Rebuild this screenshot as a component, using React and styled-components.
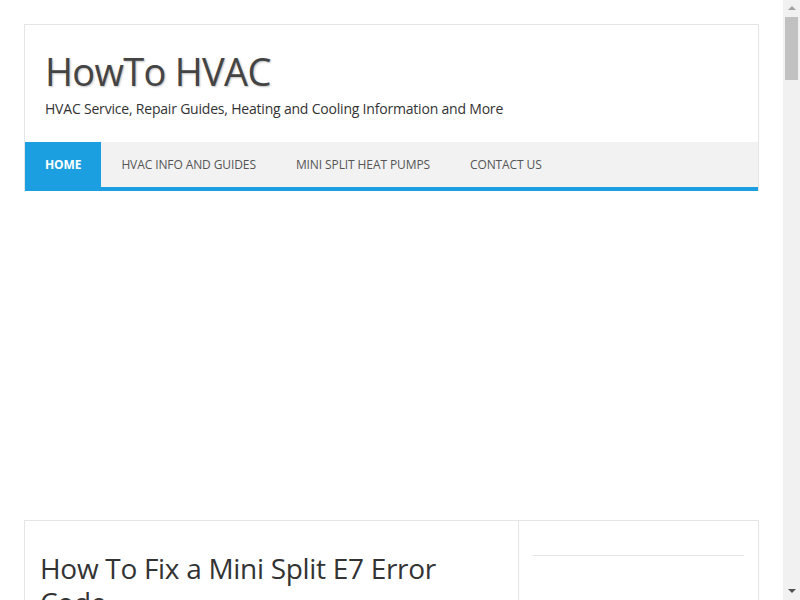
import React from "react";
import styled, { createGlobalStyle } from "styled-components";

const GlobalStyle = createGlobalStyle`
  html, body {
    margin: 0;
    padding: 0;
    background: #fff;
  }
  body {
    font-family: "Open Sans", "Noto Sans", sans-serif;
    color: #333;
    padding-right: 17px;
  }
`;

const Page = styled.div`
  padding: 24px;
  min-height: 5400px;
  box-sizing: border-box;
`;

const Header = styled.header`
  border: 1px solid #e5e5e5;
  border-bottom: none;
`;

const Branding = styled.div`
  padding: 23px 20px 23px 20px;
`;

const SiteTitle = styled.h1`
  margin: 0;
  font-size: 38px;
  font-weight: 400;
  line-height: 46px;
  letter-spacing: -0.7px;
  color: #444;
  text-shadow: 1px 1px 2px rgba(0, 0, 0, 0.25);
`;

const Tagline = styled.p`
  margin: 5px 0 0 0;
  font-size: 14px;
  line-height: 20px;
  letter-spacing: -0.2px;
  color: #333;
`;

const Navbar = styled.nav`
  display: flex;
  height: 45px;
  background: #f2f2f2;
  border-bottom: 4px solid #1b9fe0;
`;

const NavItem = styled.a`
  display: flex;
  align-items: center;
  padding: 0 20px;
  font-size: 12px;
  letter-spacing: -0.1px;
  text-transform: uppercase;
  text-decoration: none;
  color: ${(p) => (p.$active ? "#fff" : "#555")};
  font-weight: ${(p) => (p.$active ? 700 : 400)};
  background: ${(p) => (p.$active ? "#1b9fe0" : "transparent")};
`;

const AdSpace = styled.div`
  height: 329px;
`;

const Content = styled.div`
  display: flex;
  border: 1px solid #e5e5e5;
  min-height: 400px;
`;

const Main = styled.main`
  flex: 1;
  padding: 30px 15px;
`;

const ArticleTitle = styled.h2`
  margin: 0;
  font-size: 28px;
  font-weight: 400;
  line-height: 34px;
  letter-spacing: -0.3px;
  color: #333;
`;

const Sidebar = styled.aside`
  width: 240px;
  border-left: 1px solid #e5e5e5;
  padding: 34px 14px;
  box-sizing: border-box;
`;

const SidebarRule = styled.hr`
  margin: 0;
  border: none;
  border-top: 1px solid #e5e5e5;
`;

/* browser scrollbar seen in the screenshot, drawn over the page edge */
const Scrollbar = styled.div`
  position: fixed;
  top: 0;
  right: 0;
  width: 17px;
  height: 100vh;
  background: #f1f1f1;
  display: flex;
  flex-direction: column;
  align-items: center;
`;

const Arrow = styled.div`
  width: 0;
  height: 0;
  margin: ${(p) => (p.$down ? "auto 0 7px" : "6px 0 0")};
  border-left: 4px solid transparent;
  border-right: 4px solid transparent;
  border-bottom: ${(p) => (p.$down ? "none" : "4px solid #a3a3a3")};
  border-top: ${(p) => (p.$down ? "4px solid #505050" : "none")};
`;

const Thumb = styled.div`
  width: 13px;
  height: 63px;
  margin-top: 7px;
  background: #c1c1c1;
`;

export default function App() {
  return (
    <>
      <GlobalStyle />
      <Page>
        <Header>
          <Branding>
            <SiteTitle>HowTo HVAC</SiteTitle>
            <Tagline>
              HVAC Service, Repair Guides, Heating and Cooling Information and More
            </Tagline>
          </Branding>
          <Navbar>
            <NavItem href="#" $active>Home</NavItem>
            <NavItem href="#">HVAC Info and Guides</NavItem>
            <NavItem href="#">Mini Split Heat Pumps</NavItem>
            <NavItem href="#">Contact Us</NavItem>
          </Navbar>
        </Header>
        <AdSpace />
        <Content>
          <Main>
            <ArticleTitle>How To Fix a Mini Split E7 Error Code</ArticleTitle>
          </Main>
          <Sidebar>
            <SidebarRule />
          </Sidebar>
        </Content>
      </Page>
      <Scrollbar>
        <Arrow />
        <Thumb />
        <Arrow $down />
      </Scrollbar>
    </>
  );
}
